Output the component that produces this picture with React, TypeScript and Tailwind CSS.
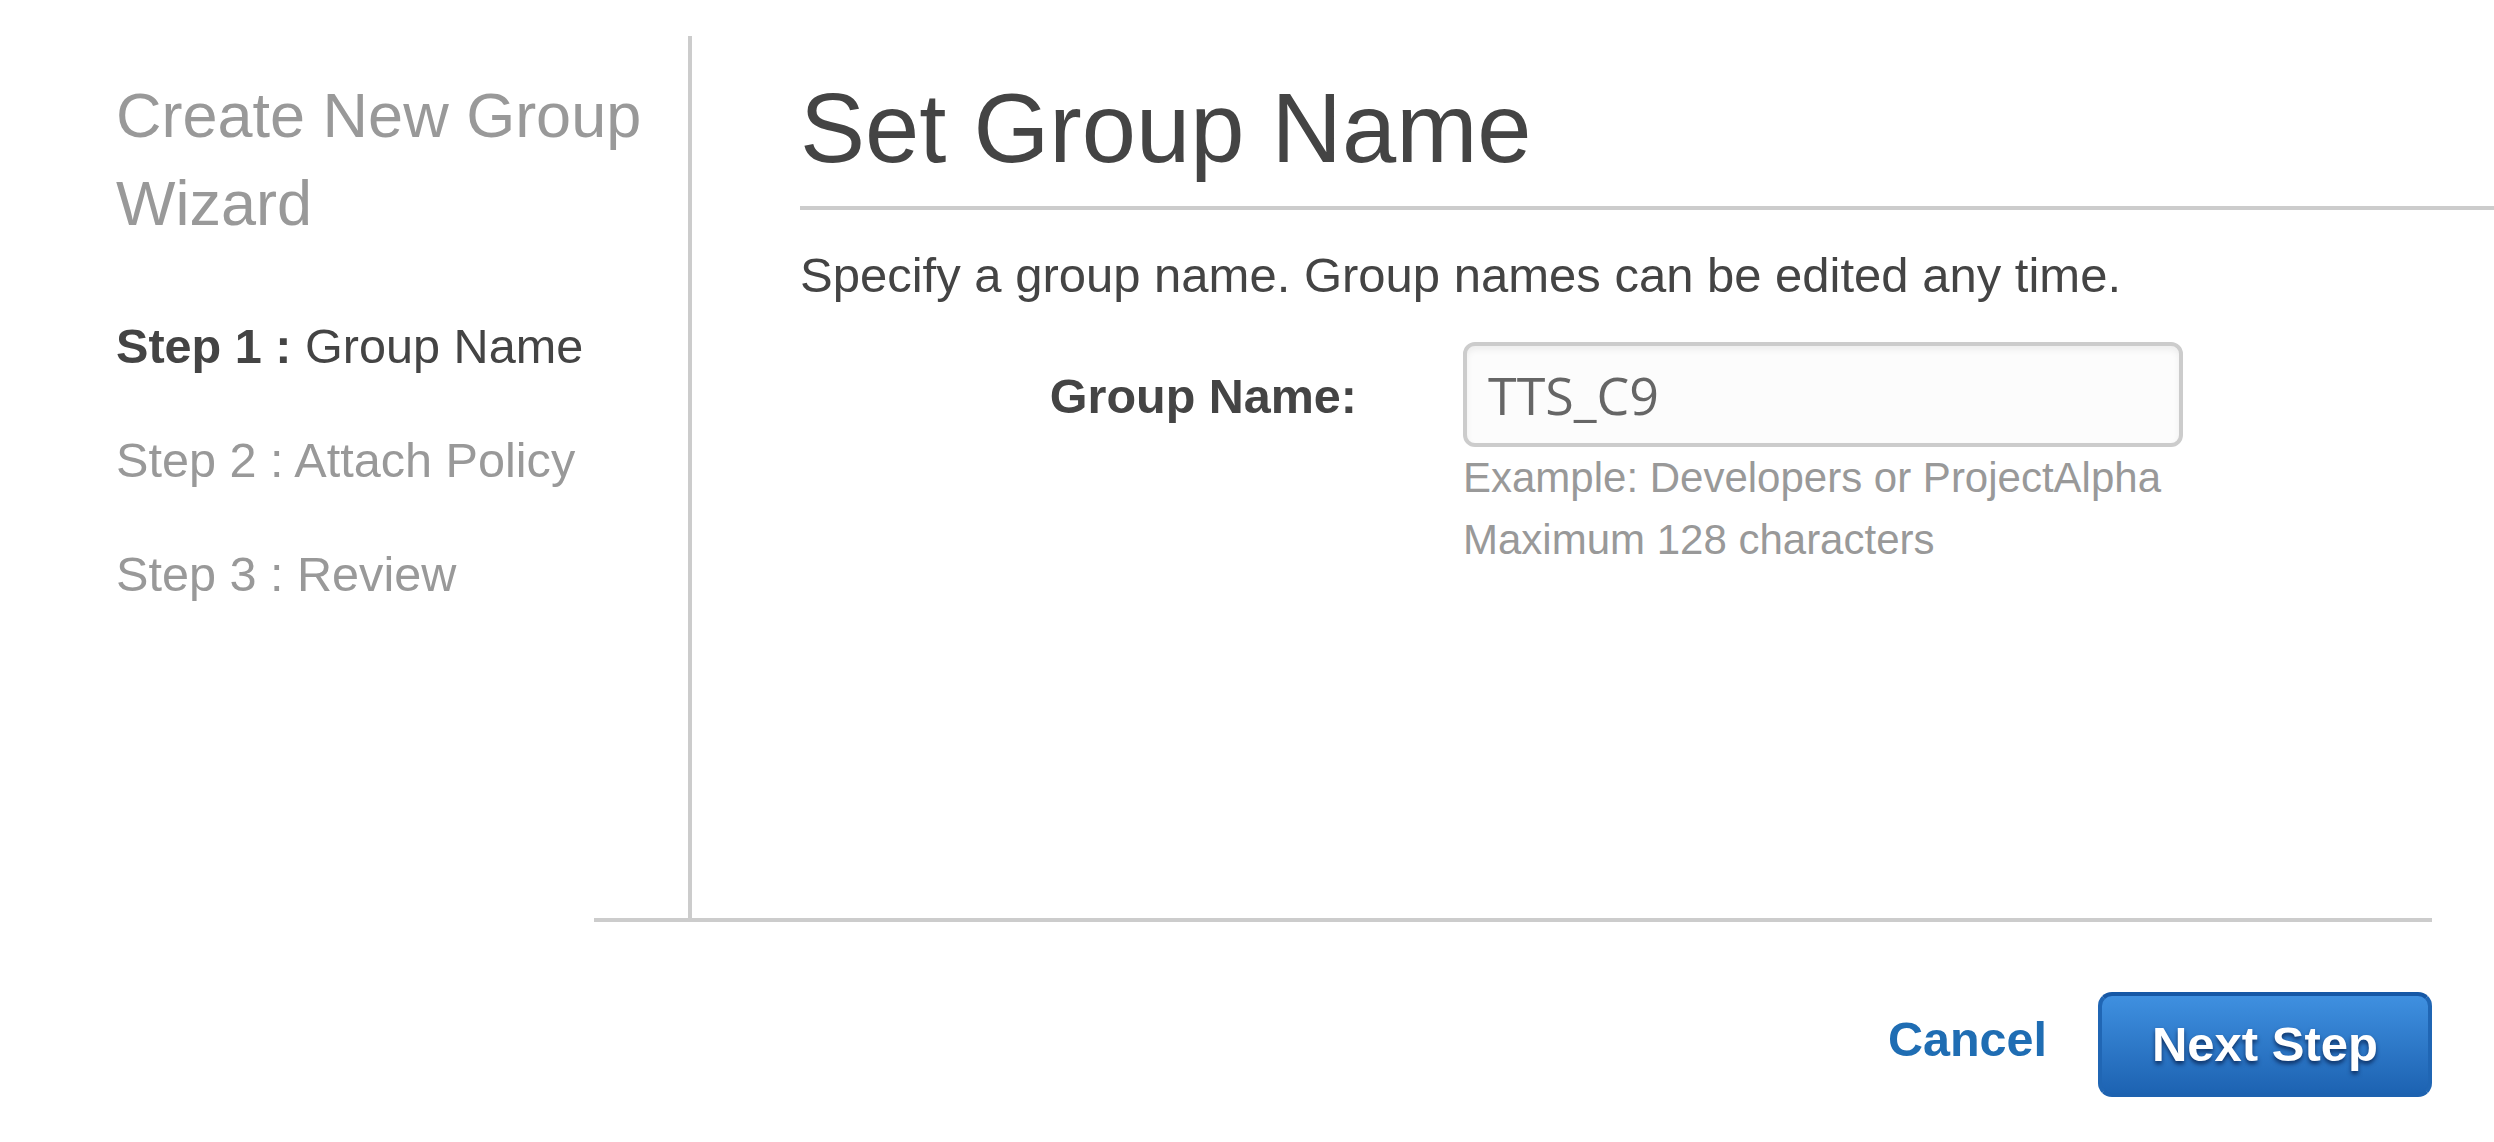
import React from "react";

export default function App() {
  return (
    <div className="w-[2494px] h-[1142px] bg-white overflow-hidden font-['Liberation_Sans']">
      <div className="flex pt-[36px]">
        <nav className="w-[692px] h-[882px] shrink-0 border-r-4 border-[#cccccc] pl-[116px] pt-[35px]">
          <h2 className="text-[63px] leading-[88px] text-[#999999] font-normal">
            Create New Group
            <br />
            Wizard
          </h2>
          <ul className="mt-[71px] flex flex-col gap-[57px] text-[48.6px] leading-[57px]">
            <li className="text-[#444444]">
              <span className="font-bold">Step 1 :</span> Group Name
            </li>
            <li className="text-[#999999]">Step 2 : Attach Policy</li>
            <li className="text-[#999999]">Step 3 : Review</li>
          </ul>
        </nav>
        <main className="flex-1 pl-[108px] pt-[35px]">
          <h1 className="text-[97.5px] leading-[116px] text-[#444444] font-normal pb-[19px] border-b-4 border-[#cccccc]">
            Set Group Name
          </h1>
          <p className="mt-[37px] text-[49px] leading-[57px] text-[#444444]">
            Specify a group name. Group names can be edited any time.
          </p>
          <div className="mt-[38px] flex">
            <label className="w-[557px] shrink-0 text-right text-[48.5px] leading-[57px] font-bold text-[#444444] pt-[26px]">
              Group Name:
            </label>
            <div className="ml-[106px] w-[720px]">
              <input
                readOnly
                value="TTS_C9"
                className="w-[720px] h-[105px] border-4 border-[#cccccc] rounded-[12px] bg-[#fcfcfc] pl-[21px] text-[52px] text-[#666666] font-['Open_Sans'] shadow-[inset_0_4px_6px_rgba(0,0,0,0.06)] outline-none"
              />
              <div className="text-[42px] leading-[62px] text-[#999999]">
                <div>Example: Developers or ProjectAlpha</div>
                <div>Maximum 128 characters</div>
              </div>
            </div>
          </div>
        </main>
      </div>
      <footer className="ml-[594px] w-[1838px] border-t-4 border-[#cccccc]">
        <div className="mt-[70px] flex items-center justify-end">
          <a className="text-[48.5px] leading-[57px] font-bold text-[#1f6db3] mr-[51px] pb-[10px] cursor-pointer">
            Cancel
          </a>
          <button className="w-[334px] h-[105px] rounded-[14px] border-4 border-t-[#1658a6] border-x-[#2066b4] border-b-[#1d62b0] bg-gradient-to-b from-[#3f90e0] to-[#1d63b2] text-white font-bold text-[49px] leading-[57px] [text-shadow:0_3px_4px_rgba(0,20,60,0.7)]">
            Next Step
          </button>
        </div>
      </footer>
    </div>
  );
}
